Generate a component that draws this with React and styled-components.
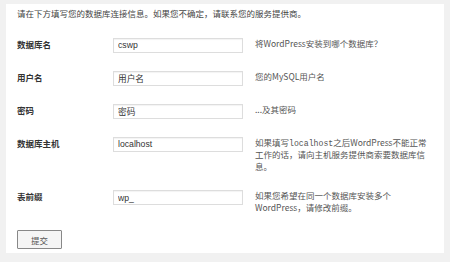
import styled, { createGlobalStyle } from "styled-components"

const GlobalStyle = createGlobalStyle`
   html, body {
      margin: 0;
      background: #f1f1f1;
   }
   body {
      font-family: "Noto Sans CJK SC", "Liberation Sans", sans-serif;
      font-size: 8.5px;
      line-height: 11.5px;
      color: #444;
   }
`

const Page = styled.div`
   padding: 4px 6px 8px 6px;
`

const Card = styled.form`
   width: 438px;
   box-sizing: border-box;
   background: #fff;
   padding: 4px 11px 4px 11px;
`

const Intro = styled.p`
   margin: 0 0 18px;
   color: #444;
`

const FormTable = styled.div`
   display: grid;
   grid-template-columns: 96px 130px 186.5px;
   row-gap: 18px;
   align-items: start;
`

const Label = styled.label`
   padding-top: 1px;
   font-weight: 600;
   color: #333;
`

const Input = styled.input`
   box-sizing: border-box;
   width: 130px;
   height: 15px;
   margin: 0;
   padding: 0 4px;
   border: 1px solid #ddd;
   box-shadow: inset 0 1px 1px rgba(0, 0, 0, 0.05);
   font-family: "Liberation Sans", "Noto Sans CJK SC", sans-serif;
   font-size: 8.67px;
   color: #333;
   outline: none;
`

const Desc = styled.div`
   padding-left: 12px;
   color: #555;

   code {
      font-family: "Liberation Mono", monospace;
      font-size: 8.2px;
   }
`

const Submit = styled.button`
   display: block;
   margin-top: 17px;
   width: 45px;
   height: 19px;
   padding: 0;
   border: 1px solid #888;
   border-radius: 1px;
   background: #f5f5f5;
   font-family: "Noto Sans CJK SC", sans-serif;
   font-size: 8.5px;
   color: #555;
`

const fields = [
   { name: "dbname", label: "数据库名", value: "cswp", desc: "将WordPress安装到哪个数据库？" },
   { name: "uname", label: "用户名", value: "用户名", desc: "您的MySQL用户名" },
   { name: "pwd", label: "密码", value: "密码", desc: "...及其密码" },
   {
      name: "dbhost",
      label: "数据库主机",
      value: "localhost",
      desc: <>如果填写<code>localhost</code>之后WordPress不能正常工作的话，请向主机服务提供商索要数据库信息。</>
   },
   { name: "prefix", label: "表前缀", value: "wp_", desc: "如果您希望在同一个数据库安装多个WordPress，请修改前缀。" }
]

const App = () => {
   return (
      <Page>
         <GlobalStyle />
         <Card onSubmit={e => e.preventDefault()}>
            <Intro>请在下方填写您的数据库连接信息。如果您不确定，请联系您的服务提供商。</Intro>
            <FormTable>
               {fields.map(f => (
                  <Row key={f.name} {...f} />
               ))}
            </FormTable>
            <Submit type="submit">提交</Submit>
         </Card>
      </Page>
   )
}

const Row = ({ name, label, value, desc }) => (
   <>
      <Label htmlFor={name}>{label}</Label>
      <Input id={name} defaultValue={value} />
      <Desc>{desc}</Desc>
   </>
)

export default App
